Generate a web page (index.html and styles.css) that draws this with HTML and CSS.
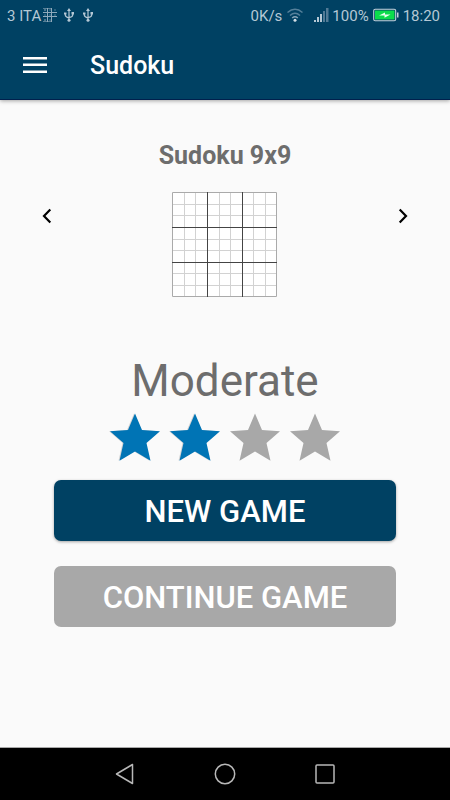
FILE: index.html
```html
<!DOCTYPE html>
<html lang="en">
<head>
<meta charset="utf-8">
<meta name="viewport" content="width=device-width, initial-scale=1">
<title>Sudoku</title>
<link rel="stylesheet" href="styles.css">
</head>
<body>
<header class="top">
  <div class="status">
    <div class="status-group">
      <span>3 ITA</span>
      <svg class="mini-grid" width="14" height="14" viewBox="0 0 14 14" fill="none" stroke="#8fa9bb" aria-hidden="true"><path d="M4.500 0v14M8.500 0v14M0 4.500h14M0 8.500h14"/><path stroke-width=".6" d="M1 2h2M2 1v2M6 2h2M11 2h2M1 7h2M6 7h2M11 7h2M1 12h2M2 11v2M6 12h2M0 .5h9M0 13.500h9"/></svg>
      <svg class="usb" width="10" height="14" viewBox="0 0 10 14" fill="none" stroke="#b5c8d5" stroke-width="1.2" aria-hidden="true"><path d="M5 2v10M1.300 5v2q0 2 3.700 3M8.700 5v2q0 2-3.700 2.500"/><path d="M5 0l2 3H3zM0 4.500h2.500v2H0zM7.500 4h2.500v2.500H7.500z" fill="#b5c8d5" stroke="none"/><circle cx="5" cy="12.300" r="1.500" fill="#b5c8d5" stroke="none"/></svg>
      <svg class="usb" width="10" height="14" viewBox="0 0 10 14" fill="none" stroke="#b5c8d5" stroke-width="1.2" aria-hidden="true"><path d="M5 2v10M1.300 5v2q0 2 3.700 3M8.700 5v2q0 2-3.700 2.500"/><path d="M5 0l2 3H3zM0 4.500h2.500v2H0zM7.500 4h2.500v2.500H7.500z" fill="#b5c8d5" stroke="none"/><circle cx="5" cy="12.300" r="1.500" fill="#b5c8d5" stroke="none"/></svg>
    </div>
    <div class="status-group">
      <span>0K/s</span>
      <svg class="wifi" width="16" height="14" viewBox="0 0 16 14" fill="none" stroke="#55809a" stroke-width="1.500" aria-hidden="true"><path d="M.5 4.500Q8-2 15.500 4.500M3 7.500Q8 3 13 7.500"/><path stroke="#86a4b7" d="M5.200 10Q8 7.500 10.800 10"/><circle cx="8" cy="12.300" r="1.500" fill="#d5e0e7" stroke="none"/></svg>
      <svg class="signal" width="15" height="14" viewBox="0 0 15 14" fill="#b5c8d5" aria-hidden="true"><path d="M0 12h2v2H0zM3 9h2v5H3zM6 6h2v8H6z"/><path fill="#517a95" d="M9 3h2v11H9zM12 0h2.500v14H12z"/></svg>
      <span>100%</span>
      <svg class="battery" width="26" height="14" viewBox="0 0 26 14" fill="none" aria-hidden="true"><rect x=".7" y="1.200" width="22" height="11.600" rx="1.500" stroke="#c4d2dc" stroke-width="1.100"/><path d="M2 2.500h19.500v9H2z" fill="#0bdc4c"/><path d="M24 4.500h1.500v5H24z" fill="#c4d2dc"/><path d="M6 7.500l6-3v2h5.500l-6 3.300V7.500z" fill="#e9fff0"/></svg>
      <span>18:20</span>
    </div>
  </div>
  <div class="appbar">
    <button class="menu" type="button" aria-label="Menu"><svg width="24" height="18" viewBox="0 0 24 18" fill="#fff"><path d="M0 0h24v2.500H0zM0 6.500h24V9H0zM0 13.500h24V16H0z"/></svg></button>
    <h1>Sudoku</h1>
  </div>
</header>
<main>
  <section class="picker">
    <button class="arrow" type="button" aria-label="Previous type"><svg width="10" height="16" viewBox="0 0 10 16" fill="none" stroke="#000" stroke-width="2.200"><path d="M8.300 1.500L2 8l6.300 6.500"/></svg></button>
    <div class="type">
      <h2>Sudoku 9x9</h2>
      <svg class="board" width="106" height="106" viewBox="0 0 106 106" fill="none" aria-hidden="true">
        <path fill="#fff" d="M0 0h105v105H0z"/>
        <path stroke="#d2d2d2" d="M12.500 0v105M23.500 0v105M47.500 0v105M58.500 0v105M81.500 0v105M93.500 0v105M0 12.500h105M0 23.500h105M0 47.500h105M0 58.500h105M0 81.500h105M0 93.500h105"/>
        <path stroke="#aaa" d="M.5.500h104v104H.5z"/>
        <path stroke="#444" d="M35.500 0v105M70.500 0v105M0 35.500h105M0 70.500h105"/>
      </svg>
    </div>
    <button class="arrow" type="button" aria-label="Next type"><svg width="10" height="16" viewBox="0 0 10 16" fill="none" stroke="#000" stroke-width="2.200"><path d="M1.700 1.500L8 8l-6.300 6.500"/></svg></button>
  </section>
  <section class="level">
    <p class="level-name">Moderate</p>
    <div class="stars" role="img" aria-label="2 of 4 stars">
      <svg class="star on" width="50" height="49" viewBox="0 0 50 49"><path d="M25 .5L32 17l18 1.200L36.500 30l4 17.800L25 38.500 9.500 47.800 13.500 30 0 18.200 18 17z"/></svg>
      <svg class="star on" width="50" height="49" viewBox="0 0 50 49"><path d="M25 .5L32 17l18 1.200L36.500 30l4 17.800L25 38.500 9.500 47.800 13.500 30 0 18.200 18 17z"/></svg>
      <svg class="star" width="50" height="49" viewBox="0 0 50 49"><path d="M25 .5L32 17l18 1.200L36.500 30l4 17.800L25 38.500 9.500 47.800 13.500 30 0 18.200 18 17z"/></svg>
      <svg class="star" width="50" height="49" viewBox="0 0 50 49"><path d="M25 .5L32 17l18 1.200L36.500 30l4 17.800L25 38.500 9.500 47.800 13.500 30 0 18.200 18 17z"/></svg>
    </div>
  </section>
  <div class="actions">
    <button class="action primary" type="button">NEW GAME</button>
    <button class="action" type="button" disabled>CONTINUE GAME</button>
  </div>
</main>
<nav class="navbar" aria-label="System">
  <button type="button" aria-label="Back"><svg width="24" height="24" viewBox="0 0 24 24"><path d="M3.500 12L19.500 2.500v19z"/></svg></button>
  <button type="button" aria-label="Home"><svg width="24" height="24" viewBox="0 0 24 24"><circle cx="12" cy="12" r="9.700"/></svg></button>
  <button type="button" aria-label="Recent apps"><svg width="24" height="24" viewBox="0 0 24 24"><rect x="3" y="3" width="18" height="18" rx="1"/></svg></button>
</nav>
</body>
</html>
```
FILE: styles.css
```css
* {
  box-sizing: border-box;
}

body {
  margin: 0;
  min-height: 100vh;
  display: flex;
  flex-direction: column;
  background: #fafafa;
  color: #6d6d6d;
  font-family: Roboto, "Liberation Sans", sans-serif;
}

h1, h2, p {
  margin: 0;
}

button {
  padding: 0;
  border: 0;
  background: none;
  font: inherit;
}

svg {
  display: block;
  flex: none;
}

.top {
  background: #004163;
  border-bottom: 1px solid #00204d;
  box-shadow: 0 1px 4px rgba(0, 0, 0, 0.35);
}

.status {
  display: flex;
  justify-content: space-between;
  height: 32px;
  padding: 0 10px 0 7px;
  color: #b5c8d5;
  font-size: 15px;
  line-height: 32px;
}

.status-group {
  display: flex;
  align-items: center;
}

.status-group svg {
  margin-bottom: 2px;
}

.mini-grid {
  margin: 0 7px 0 2px;
}

.usb {
  margin-right: 9px;
}

.wifi {
  margin: 0 11px 0 5px;
}

.signal {
  margin-right: 3px;
}

.battery {
  margin: 0 4px;
}

.appbar {
  display: flex;
  align-items: center;
  height: 67px;
  padding: 0 23px;
  gap: 43px;
  color: #fff;
}

.appbar h1 {
  font-size: 25px;
  font-weight: 500;
  line-height: 32px;
}

.picker {
  display: flex;
  justify-content: space-between;
  align-items: center;
  padding: 40px 42px 0;
}

.arrow {
  padding-bottom: 6px;
}

.type {
  display: flex;
  flex-direction: column;
  align-items: center;
  gap: 20px;
}

.type h2 {
  font-size: 25px;
  font-weight: 700;
  line-height: 32px;
}

.level {
  display: flex;
  flex-direction: column;
  align-items: center;
  padding-top: 53px;
}

.level-name {
  font-size: 44px;
  line-height: 60px;
}

.stars {
  display: flex;
  gap: 10px;
  padding-top: 2px;
}

.star {
  fill: #a8a8a8;
}

.star.on {
  fill: #0074b5;
  filter: drop-shadow(-1px 0 0 rgba(90, 90, 90, 0.25));
}

.actions {
  display: flex;
  flex-direction: column;
  gap: 25px;
  padding: 18px 12% 24px;
}

.action {
  height: 61px;
  padding-top: 2px;
  border-radius: 7px;
  background: #a8a8a8;
  color: #fff;
  font-size: 31px;
  font-weight: 500;
}

.action.primary {
  background: #004163;
  box-shadow: 0 1px 3px rgba(0, 0, 0, 0.35);
}

.navbar {
  display: flex;
  justify-content: center;
  align-items: center;
  gap: 76px;
  height: 53px;
  margin-top: auto;
  border-top: 1px solid #a8a8a8;
  background: #000;
}

.navbar svg {
  fill: none;
  stroke: #b8b8b8;
  stroke-width: 1.5px;
  stroke-linejoin: round;
}
```
